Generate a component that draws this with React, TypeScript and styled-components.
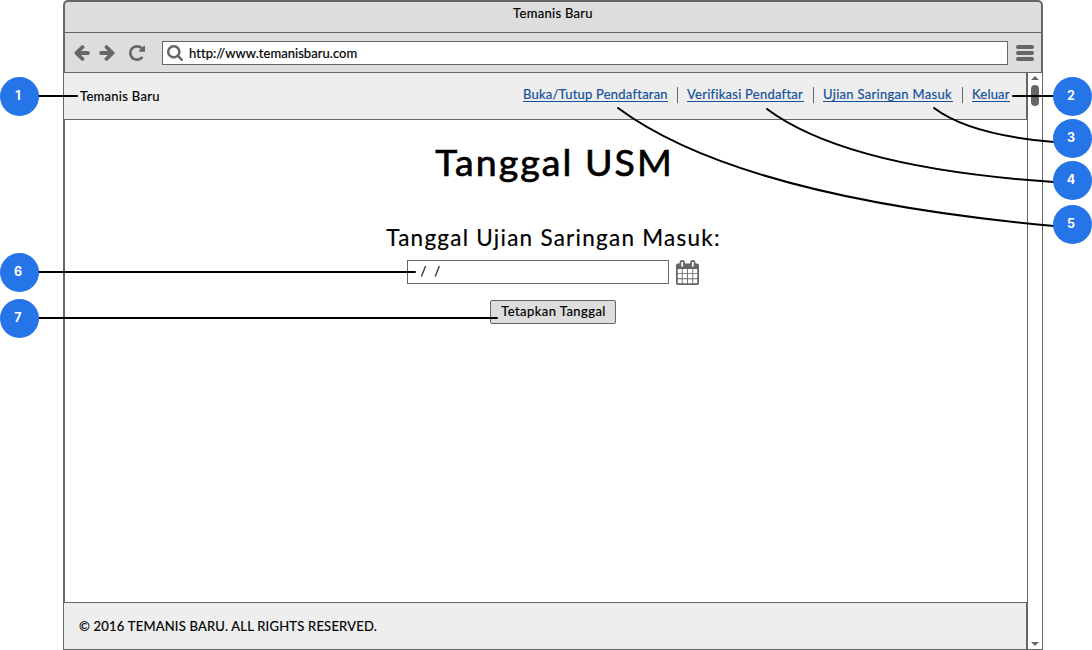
import React from "react";
import styled, { createGlobalStyle } from "styled-components";

const line = "#666666";

const GlobalStyle = createGlobalStyle`
  *, *::before, *::after { box-sizing: border-box; }
  body {
    margin: 0;
    background: #fff;
    color: #000;
    font-family: Lato, "Open Sans", sans-serif;
    font-size: 13px;
    overflow: hidden;
  }
`;

const Stage = styled.div`
  position: relative;
  width: 1092px;
  height: 650px;
  padding: 0 49px 0 63px;
`;

const Browser = styled.div`
  display: flex;
  flex-direction: column;
  width: 980px;
  height: 650px;
`;

const Chrome = styled.div`
  height: 73px;
  background: #ddd;
  border: 2px solid ${line};
  border-bottom-width: 1px;
  border-radius: 5px 5px 0 0;
`;

const Text = styled.span<{ $size?: number; $spacing?: number; $weight?: number }>`
  display: block;
  white-space: nowrap;
  font-size: ${(p) => p.$size ?? 13}px;
  letter-spacing: ${(p) => p.$spacing ?? 0}px;
  -webkit-text-stroke: ${(p) => p.$weight ?? 0.2}px currentColor;
`;

const TitleBar = styled.div`
  display: flex;
  justify-content: center;
  height: 31px;
  padding-top: 3px;
  line-height: 16px;
  border-bottom: 1px solid ${line};
`;

const Toolbar = styled.div`
  display: flex;
  align-items: center;
  height: 39px;
  padding: 0 7px 0 9px;
`;

const Glyph = styled.svg<{ $gap?: number; $flip?: boolean }>`
  display: block;
  flex: none;
  fill: ${line};
  margin-right: ${(p) => p.$gap ?? 0}px;
  transform: ${(p) => (p.$flip ? "scaleX(-1)" : "none")};
`;

const AddressBar = styled.div`
  display: flex;
  align-items: center;
  width: 846px;
  height: 24px;
  margin-right: 8px;
  padding-left: 4px;
  background: #fff;
  border: 1px solid ${line};
`;

const MenuIcon = styled.div`
  display: flex;
  flex-direction: column;
  gap: 2px;
  i {
    width: 18px;
    height: 4px;
    border-radius: 2px;
    background: ${line};
  }
`;

const Viewport = styled.div`
  display: flex;
  flex: 1;
`;

const Page = styled.div`
  display: flex;
  flex-direction: column;
  width: 964px;
`;

const Header = styled.header`
  display: flex;
  justify-content: space-between;
  height: 47px;
  padding: 0 16px;
  background: #eee;
  border: 1px solid ${line};
  border-top: 0;
`;

const Brand = styled.div`
  padding-top: 14px;
  line-height: 18px;
`;

const Nav = styled.nav`
  display: flex;
  padding-top: 13px;
`;

const NavLink = styled.a<{ $width: number }>`
  width: ${(p) => p.$width}px;
  height: 16px;
  line-height: 17px;
  color: #14509a;
  border-bottom: 1px solid #14509a;
`;

const Divider = styled.i`
  width: 1px;
  height: 16px;
  margin: 1px 9px 0;
  background: ${line};
`;

const Main = styled.main`
  display: flex;
  flex-direction: column;
  align-items: center;
  flex: 1;
  padding: 18px 0 0 13px;
  border-left: 2px solid ${line};
`;

const Heading = styled.h1`
  height: 48px;
  margin: 0;
  padding-left: 4px;
  font-weight: 400;
  line-height: 48px;
`;

const Label = styled.label`
  height: 30px;
  margin-top: 37px;
  padding-left: 2px;
  line-height: 30px;
`;

const DateRow = styled.div`
  display: flex;
  gap: 7px;
  margin-top: 7px;
`;

const DateField = styled.div`
  display: flex;
  width: 262px;
  height: 24px;
  padding-left: 13px;
  line-height: 21px;
  border: 1px solid ${line};
`;

const Button = styled.button`
  display: flex;
  justify-content: center;
  width: 126px;
  height: 24px;
  margin: 15px 0 0;
  padding: 0 0 0 2px;
  font-family: inherit;
  color: #000;
  line-height: 21px;
  background: #ddd;
  border: 1px solid ${line};
  border-radius: 2px;
`;

const Footer = styled.footer`
  height: 48px;
  padding: 14px 15px;
  line-height: 18px;
  background: #eee;
  border: 1px solid ${line};
`;

const Scrollbar = styled.div`
  display: flex;
  flex-direction: column;
  align-items: center;
  width: 16px;
  padding: 3px 0;
  border: 1px solid ${line};
  border-top: 0;
`;

const ScrollThumb = styled.div`
  width: 8px;
  height: 21px;
  margin: 5px 0 auto;
  border-radius: 4px;
  background: ${line};
`;

const Connectors = styled.svg`
  position: absolute;
  inset: 0;
  fill: none;
  stroke: #000;
  stroke-width: 2;
  stroke-linecap: round;
`;

const Marker = styled.div<{ $x: number; $y: number }>`
  position: absolute;
  left: ${(p) => p.$x}px;
  top: ${(p) => p.$y}px;
  width: 39px;
  height: 39px;
  padding-right: 3px;
  border-radius: 50%;
  background: #2574e8;
  color: #fff;
  font: 700 12.5px/37px Inter, sans-serif;
  text-align: center;
`;

const arrow =
  "M1664 896v128q0 53-32.5 90.5t-84.5 37.5h-704l293 294q38 36 38 90t-38 90l-75 76q-37 37-90 37-52 0-91-37l-651-652q-37-37-37-90 0-52 37-91l651-650q38-38 91-38 52 0 90 38l75 74q38 38 38 91t-38 91l-293 293h704q52 0 84.5 37.5t32.5 90.5z";
const reload =
  "M1664 256v448q0 26-19 45t-45 19h-448q-42 0-59-40-17-39 14-69l138-138q-148-137-349-137-104 0-198.5 40.5t-163.5 109.5-109.5 163.5-40.5 198.5 40.5 198.5 109.5 163.5 163.5 109.5 198.5 40.5q119 0 225-52t179-147q7-10 23-12 15 0 25 9l137 138q9 8 9.5 20.5t-7.5 22.5q-109 132-264 204.5t-327 72.5q-156 0-298-61t-245-164-164-245-61-298 61-298 164-245 245-164 298-61q147 0 284.5 55.5t244.5 156.5l130-129q29-31 70-14 39 17 39 59z";
const search =
  "M1216 832q0-185-131.5-316.5t-316.5-131.5-316.5 131.5-131.5 316.5 131.5 316.5 316.5 131.5 316.5-131.5 131.5-316.5zm512 832q0 52-38 90t-90 38q-54 0-90-38l-343-342q-179 124-399 124-143 0-273.5-55.5t-225-150-150-225-55.5-273.5 55.5-273.5 150-225 225-150 273.5-55.5 273.5 55.5 225 150 150 225 55.5 273.5q0 220-124 399l343 343q37 37 37 90z";
const calendar =
  "M192 1664h288v-288h-288v288zm352 0h320v-288h-320v288zm-352-352h288v-320h-288v320zm352 0h320v-320h-320v320zm-352-384h288v-288h-288v288zm736 736h320v-288h-320v288zm-384-736h320v-288h-320v288zm768 736h288v-288h-288v288zm-384-352h320v-320h-320v320zm-352-864v-288q0-13-9.5-22.5t-22.5-9.5h-64q-13 0-22.5 9.5t-9.5 22.5v288q0 13 9.5 22.5t22.5 9.5h64q13 0 22.5-9.5t9.5-22.5zm736 864h288v-320h-288v320zm-384-384h320v-288h-320v288zm384 0h288v-288h-288v288zm32-480v-288q0-13-9.5-22.5t-22.5-9.5h-64q-13 0-22.5 9.5t-9.5 22.5v288q0 13 9.5 22.5t22.5 9.5h64q13 0 22.5-9.5t9.5-22.5zm384-64v1280q0 52-38 90t-90 38h-1408q-52 0-90-38t-38-90v-1280q0-52 38-90t90-38h128v-96q0-66 47-113t113-47h64q66 0 113 47t47 113v96h384v-96q0-66 47-113t113-47h64q66 0 113 47t47 113v96h128q52 0 90 38t38 90z";

const links = [
  { label: "Buka/Tutup Pendaftaran", width: 145, spacing: 0.23 },
  { label: "Verifikasi Pendaftar", width: 117, spacing: 0.25 },
  { label: "Ujian Saringan Masuk", width: 130, spacing: 0.3 },
  { label: "Keluar", width: 38, spacing: 0.2 },
];

const markers = [
  { n: 1, x: 0, y: 77 },
  { n: 2, x: 1053, y: 77 },
  { n: 3, x: 1053, y: 119 },
  { n: 4, x: 1053, y: 161 },
  { n: 5, x: 1053, y: 205 },
  { n: 6, x: 0, y: 253 },
  { n: 7, x: 0, y: 299 },
];

export default function App() {
  return (
    <Stage>
      <GlobalStyle />
      <Browser>
        <Chrome>
          <TitleBar>
            <Text $spacing={0.3}>Temanis Baru</Text>
          </TitleBar>
          <Toolbar>
            <Glyph $gap={9} width="16" height="16" viewBox="192 181 1472 1558"><path d={arrow} /></Glyph>
            <Glyph $gap={14} $flip width="16" height="16" viewBox="192 181 1472 1558"><path d={arrow} /></Glyph>
            <Glyph $gap={17} width="16" height="16" viewBox="128 128 1536 1536"><path d={reload} /></Glyph>
            <AddressBar>
              <Glyph $gap={6} width="16" height="16" viewBox="64 128 1664 1664"><path d={search} /></Glyph>
              <Text $spacing={0.05}>http://www.temanisbaru.com</Text>
            </AddressBar>
            <MenuIcon><i /><i /><i /></MenuIcon>
          </Toolbar>
        </Chrome>
        <Viewport>
          <Page>
            <Header>
              <Brand><Text $spacing={0.3}>Temanis Baru</Text></Brand>
              <Nav>
                {links.map((l, i) => (
                  <React.Fragment key={l.label}>
                    {i > 0 && <Divider />}
                    <NavLink $width={l.width}><Text $spacing={l.spacing}>{l.label}</Text></NavLink>
                  </React.Fragment>
                ))}
              </Nav>
            </Header>
            <Main>
              <Heading><Text $size={37.5} $spacing={2.05} $weight={0.7}>Tanggal USM</Text></Heading>
              <Label><Text $size={22.5} $spacing={1.25} $weight={0.2}>Tanggal Ujian Saringan Masuk:</Text></Label>
              <DateRow>
                <DateField><Text $spacing={0.4}>{"/\u00a0\u00a0/"}</Text></DateField>
                <Glyph width="23" height="25" viewBox="64 0 1664 1792" preserveAspectRatio="none"><path d={calendar} /></Glyph>
              </DateRow>
              <Button><Text $spacing={0.45}>Tetapkan Tanggal</Text></Button>
            </Main>
            <Footer><Text $spacing={0.22}>© 2016 TEMANIS BARU. ALL RIGHTS RESERVED.</Text></Footer>
          </Page>
          <Scrollbar>
            <Glyph width="8" height="4" viewBox="0 0 8 4"><path d="M0 4L4 0L8 4Z" /></Glyph>
            <ScrollThumb />
            <Glyph width="8" height="4" viewBox="0 0 8 4"><path d="M0 0L4 4L8 0Z" /></Glyph>
          </Scrollbar>
        </Viewport>
      </Browser>
      <Connectors width="1092" height="650" viewBox="0 0 1092 650">
        <path d="M38 96H77M1013 96H1054M38 272H415M38 318H497" />
        <path d="M934 108Q970 135 1054 142" />
        <path d="M767 109Q846 168 1054 182" />
        <path d="M618 108Q738 197 1054 226" />
      </Connectors>
      {markers.map((m) => (
        <Marker key={m.n} $x={m.x} $y={m.y}>{m.n}</Marker>
      ))}
    </Stage>
  );
}
